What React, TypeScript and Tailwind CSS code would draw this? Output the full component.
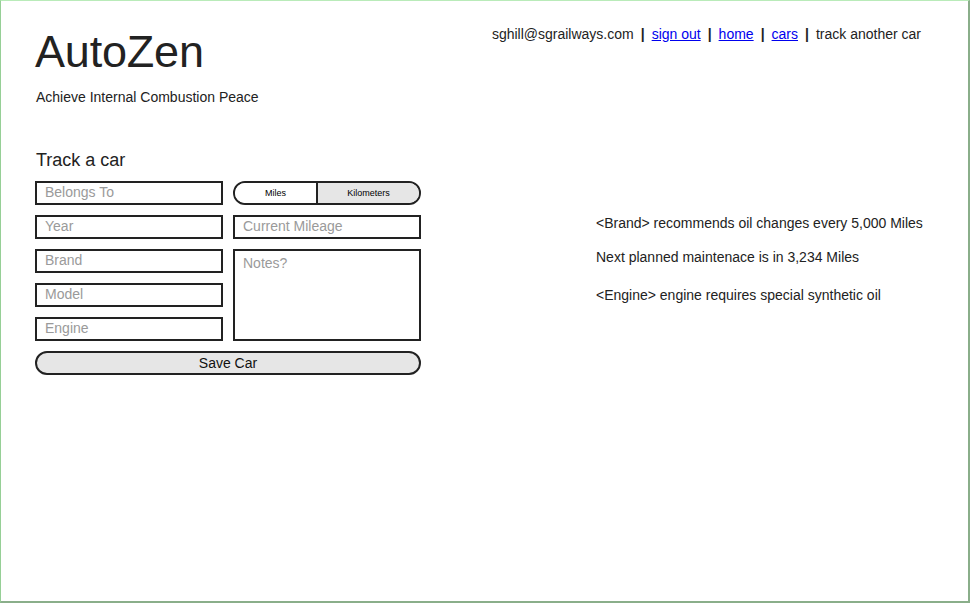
import React from "react"

const font = { fontFamily: '"Liberation Sans", Arial, Helvetica, sans-serif' }

function Field({ placeholder }: { placeholder: string }) {
  return (
    <input
      type="text"
      placeholder={placeholder}
      className="block w-[188px] h-[24px] border-2 border-[#222] bg-white px-[8px] pb-[2px] text-[14px] text-[#222] placeholder:text-[#9a9a9a] outline-none"
    />
  )
}

export default function App() {
  return (
    <div
      style={font}
      className="w-[970px] h-[603px] bg-white border-t border-t-[#b9ebb9] border-l border-l-[#96cf96] border-r-2 border-r-[#8aae8a] border-b-2 border-b-[#8aae8a] text-[#222] overflow-hidden"
    >
      <div className="pl-[34px] pr-[47px]">
        <header className="flex justify-between items-start h-[105px]">
          <div>
            <h1 className="mt-[28px] text-[45px] leading-[45px] text-[#222] tracking-[-0.2px]">AutoZen</h1>
            <p className="mt-[15px] text-[14px] leading-[16px] ml-[1px]">Achieve Internal Combustion Peace</p>
          </div>
          <nav className="mt-[25px] text-[14px] leading-[16px] flex items-center gap-[7px] whitespace-nowrap">
            <span>sghill@sgrailways.com</span>
            <span className="font-bold">|</span>
            <a href="#" className="text-[#0000ee] underline">sign out</a>
            <span className="font-bold">|</span>
            <a href="#" className="text-[#0000ee] underline">home</a>
            <span className="font-bold">|</span>
            <a href="#" className="text-[#0000ee] underline">cars</a>
            <span className="font-bold">|</span>
            <span>track another car</span>
          </nav>
        </header>

        <div className="flex">
          <div className="w-[386px] shrink-0">
            <h2 className="mt-[44px] text-[18px] leading-[20px] ml-[1px]">Track a car</h2>
            <div className="mt-[11px] flex gap-[10px]">
              <div className="flex flex-col gap-[10px]">
                <Field placeholder="Belongs To" />
                <Field placeholder="Year" />
                <Field placeholder="Brand" />
                <Field placeholder="Model" />
                <Field placeholder="Engine" />
              </div>
              <div className="flex flex-col gap-[10px]">
                <div className="flex w-[188px] h-[24px] border-2 border-[#222] rounded-full overflow-hidden text-[9px] text-black">
                  <button className="w-[81px] flex items-center justify-center pt-[1px] bg-white">Miles</button>
                  <button className="flex-1 flex items-center justify-center pt-[1px] bg-[#e6e6e6] border-l-2 border-[#222]">Kilometers</button>
                </div>
                <Field placeholder="Current Mileage" />
                <textarea
                  placeholder="Notes?"
                  className="block w-[188px] h-[92px] border-2 border-[#222] bg-white px-[8px] py-[4px] text-[14px] leading-[16px] resize-none placeholder:text-[#9a9a9a] outline-none"
                />
              </div>
            </div>
            <button className="mt-[10px] w-[386px] h-[24px] border-2 border-[#222] rounded-full bg-[#e6e6e6] text-[14px] leading-[18px] text-[#111]">
              Save Car
            </button>
          </div>

          <div className="ml-[175px] pt-[109px] text-[14px] leading-[16px] whitespace-nowrap">
            <p>&lt;Brand&gt; recommends oil changes every 5,000 Miles</p>
            <p className="mt-[18px]">Next planned maintenace is in 3,234 Miles</p>
            <p className="mt-[22px]">&lt;Engine&gt; engine requires special synthetic oil</p>
          </div>
        </div>
      </div>
    </div>
  )
}
